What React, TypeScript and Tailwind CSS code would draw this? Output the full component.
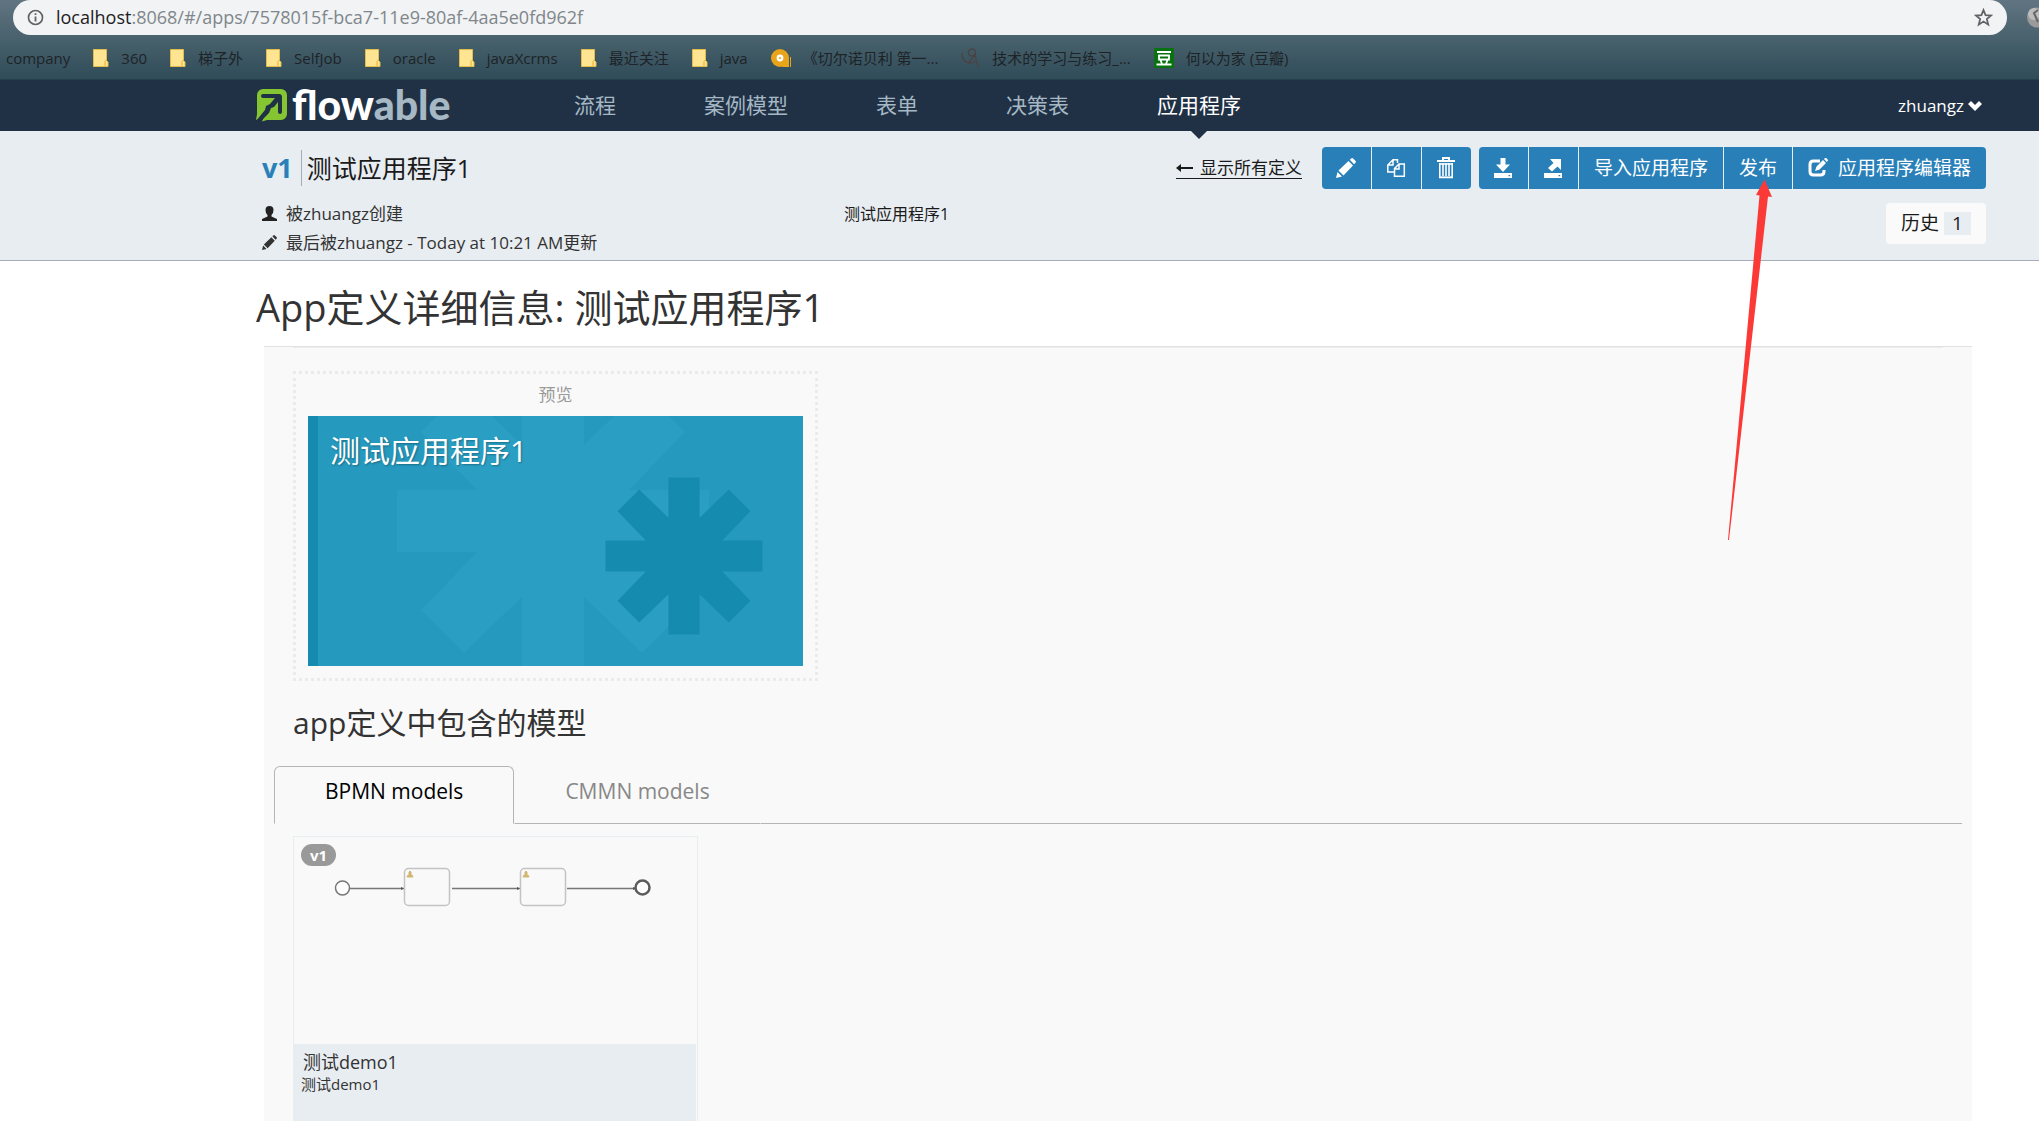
import { useState, type ReactNode } from "react"

type Bookmark = {
	title: string
	icon: "none" | "folder" | "disc" | "figure" | "douban"
}

const bookmarks: Bookmark[] = [
	{ title: "company", icon: "none" },
	{ title: "360", icon: "folder" },
	{ title: "梯子外", icon: "folder" },
	{ title: "SelfJob", icon: "folder" },
	{ title: "oracle", icon: "folder" },
	{ title: "javaXcrms", icon: "folder" },
	{ title: "最近关注", icon: "folder" },
	{ title: "java", icon: "folder" },
	{ title: "《切尔诺贝利 第一...", icon: "disc" },
	{ title: "技术的学习与练习_...", icon: "figure" },
	{ title: "何以为家 (豆瓣)", icon: "douban" }
]

const navItems = ["流程", "案例模型", "表单", "决策表", "应用程序"]

const tabs = ["BPMN models", "CMMN models"]

function BookmarkIcon({ icon }: { icon: Bookmark["icon"] }) {
	if (icon === "folder") {
		return (
			<svg width="16" height="18" viewBox="0 0 16 18">
				<path d="M.5.5h13v11l1.500 1.500v4.500H.5z" fill="#ffe591" stroke="#e3bd4c" />
				<path d="M12 17v-4.500l1.500-1.500" fill="none" stroke="#e3b02c" />
			</svg>
		)
	}
	if (icon === "disc") {
		return (
			<svg width="20" height="18" viewBox="0 0 20 18">
				<circle cx="9" cy="9" r="9" fill="#e8a51c" />
				<path d="M11 18l7-9v9z" fill="#e8a51c" />
				<circle cx="9" cy="9" r="3.400" fill="#fff" />
				<circle cx="9" cy="9" r="1.200" fill="#e8b95a" />
				<path d="M19.500 8v10" stroke="#e8a51c" />
			</svg>
		)
	}
	if (icon === "figure") {
		return (
			<svg width="19" height="20" viewBox="0 0 19 20" fill="none" stroke="#4a4444">
				<circle cx="11" cy="4.500" r="3.500" strokeWidth="1.600" />
				<path d="M1 5q0 6 4 9 3 1 5-2l4-5q1 6 3.500 12M7 15q4 1 8-2" strokeWidth="1.400" />
			</svg>
		)
	}
	if (icon === "douban") {
		return (
			<svg width="20" height="20" viewBox="0 0 20 20" fill="none" stroke="#fff" strokeWidth="1.800">
				<path d="M0 0h20v20H0z" fill="#07720f" stroke="none" />
				<path d="M3 4h14M5 7.500h10v4H5zM6.500 12l1.500 4M13.500 12L12 16M2.500 16.500h15" />
			</svg>
		)
	}
	return null
}

function BrowserBar() {
	return (
		<div className="h-20 bg-linear-to-b from-[#607581] via-[#48616c] to-[#2f4c58] border-b border-[#26404a]">
			<div className="flex items-start">
				<div className="flex flex-1 items-center h-[35px] ml-[13px] px-[14px] rounded-[18px] bg-[#f1f3f4] text-[18px]">
					<svg width="17" height="17" viewBox="0 0 17 17" fill="none" stroke="#5f6368">
						<circle cx="8.500" cy="8.500" r="7" strokeWidth="1.700" />
						<path d="M8.500 7.500v5M8.500 4.300v1.700" strokeWidth="1.800" />
					</svg>
					<label htmlFor="address" className="ml-3 text-[#202124]">
						localhost
					</label>
					<input
						id="address"
						type="text"
						defaultValue=":8068/#/apps/7578015f-bca7-11e9-80af-4aa5e0fd962f"
						className="flex-1 text-[#80868b] outline-none"
					/>
					<button aria-label="收藏">
						<svg width="19" height="19" viewBox="0 0 24 24" fill="none" stroke="#5f6368" strokeWidth="2.200">
							<path d="M12 2.500l2.600 6.500 7 .5-5.400 4.500 1.800 7-6-3.900-6 3.900 1.800-7L2.400 9.500l7-.5z" />
						</svg>
					</button>
				</div>
				<svg width="32" height="35" viewBox="0 0 32 35">
					<circle cx="30" cy="17.500" r="10" fill="#9a9a9a" />
					<circle cx="27" cy="14" r="6" fill="#bcbcbc" />
					<path d="M31 10l-4 3 4 9" fill="none" stroke="#666" strokeWidth="2" />
				</svg>
			</div>
			<ul className="flex items-center h-[46px] gap-[23px] pl-[6px] text-[15px] text-[#1d2327] whitespace-nowrap">
				{bookmarks.map((item) => (
					<li key={item.title} className="flex items-center gap-3">
						<BookmarkIcon icon={item.icon} />
						<a href="#">{item.title}</a>
					</li>
				))}
			</ul>
		</div>
	)
}

function Logo() {
	return (
		<a href="#" aria-label="flowable" className="flex items-center gap-1 w-[200px]">
			<svg width="32" height="33" viewBox="0 0 32 33">
				<path
					d="M7 0h18a6 6 0 0 1 6 6v19a6 6 0 0 1-6 6H11l-5 1.500 2-5L0 31l1-6V6a6 6 0 0 1 6-6z"
					fill="#84c531"
				/>
				<path
					d="M7 5h16a3 3 0 0 1 3 3v15a2 2 0 0 1-4 0V13l-4 5-3 1-2 5-7 7-6 1 9-11 1-4 4-2 5-6H7a2 2 0 0 1 0-4z"
					fill="#203146"
				/>
			</svg>
			<span className="pb-[2px] font-['Lato',sans-serif] font-black text-[41px] leading-[40px] text-white">
				flow<span className="text-[#a5b8c3]">able</span>
			</span>
		</a>
	)
}

function NavBar() {
	return (
		<nav className="flex items-center h-[51px] pl-64 pr-[57px] bg-[#203146]">
			<Logo />
			<ul className="flex flex-1 gap-[88px] pl-[118px] text-[21px] leading-[51px] text-[#a5b8c3]">
				{navItems.map((item) => (
					<li key={item} className="relative">
						<a href="#" className={item === "应用程序" ? "text-white" : ""}>
							{item}
						</a>
						{item === "应用程序" && (
							<span className="absolute top-full left-1/2 -translate-x-1/2 border-x-8 border-x-transparent border-t-8 border-t-[#203146]" />
						)}
					</li>
				))}
			</ul>
			<button className="flex items-center gap-1 text-[17px] text-white">
				zhuangz
				<svg width="14" height="10" viewBox="0 0 14 10">
					<path d="M0 3l3-3 4 4 4-4 3 3-7 7z" fill="#fff" />
				</svg>
			</button>
		</nav>
	)
}

function PencilIcon({ size }: { size: number }) {
	return (
		<svg width={size} height={size} viewBox="0 0 20 20" fill="currentColor">
			<path d="M0 20l1.500-6 4.500 4.500zM2.500 12.500L12.500 3 17 7.500 7.500 17.500zM13.800 1.800L15.500.3q.8-.6 1.600.2l2.500 2.500q.7.8 0 1.600l-1.500 1.600z" />
		</svg>
	)
}

function CopyIcon() {
	return (
		<svg width="20" height="20" viewBox="0 0 20 20" fill="none" stroke="currentColor" strokeWidth="1.500">
			<path d="M8 14H1.800V7L7 1.800h4.500V5M7 2v5H2" />
			<path d="M8.500 10.500L13 6h5.300v12.300H8.500zM13 6v5H8.500" />
		</svg>
	)
}

function TrashIcon() {
	return (
		<svg width="18" height="22" viewBox="0 0 18 22" fill="none" stroke="currentColor">
			<path d="M0 4h18M6 3V1h6v2" strokeWidth="2" />
			<path d="M2.800 6v14.200h12.400V6M6 6v13M9 6v13M12 6v13" strokeWidth="1.600" />
			<path d="M2 7h14M2 20.500h14" strokeWidth="1.600" />
		</svg>
	)
}

function DownloadIcon() {
	return (
		<svg width="18" height="20" viewBox="0 0 18 20" fill="currentColor">
			<path d="M6.500 0h5v6.500H16l-7 7.500-7-7.500h4.500z" />
			<path fillRule="evenodd" d="M0 15h18v5H0zM14.500 17v1.200h1.700V17z" />
		</svg>
	)
}

function ExportIcon() {
	return (
		<svg width="18" height="20" viewBox="0 0 18 20" fill="currentColor">
			<path d="M6 1h11v11l-3.500-3.500L8 13.500 4 10l5.500-5z" />
			<path fillRule="evenodd" d="M0 15h18v5H0zM14.500 17v1.200h1.700V17z" />
		</svg>
	)
}

function EditIcon() {
	return (
		<svg width="20" height="20" viewBox="0 0 20 20">
			<path
				d="M12 3H5.500Q2 3 2 6.500v7Q2 17 5.500 17h7q3.500 0 3.500-3.500V12"
				fill="none"
				stroke="currentColor"
				strokeWidth="3"
			/>
			<path d="M7 13l1.500-4.500L15 2l3 3-6.500 6.500zM16 1l1-1q1-.5 1.500.2l1.200 1.200q.6.8 0 1.600l-.9.900z" fill="currentColor" />
		</svg>
	)
}

function ActionButton({ label, children }: { label?: string; children: ReactNode }) {
	return (
		<button
			aria-label={label}
			className={`flex items-center justify-center gap-[10px] h-[42px] bg-[#2980b9] hover:bg-[#2472a4] text-[19px] text-white whitespace-nowrap ${
				label ? "w-[49px]" : "px-[15px]"
			}`}
		>
			{children}
		</button>
	)
}

function DefinitionHeader() {
	return (
		<header className="h-[130px] pl-[262px] pr-[53px] pt-4 bg-[#e8edf1] border-b border-[#a4acb9]">
			<div className="flex items-center justify-between h-[42px]">
				<h2 className="flex items-center text-[25px] leading-[36px] text-[#1a1a1a]">
					<span className="pr-2 mr-[5px] border-r border-[#a4acb9] text-[27px] font-bold text-[#2980b9]">
						v1
					</span>
					测试应用程序1
				</h2>
				<div className="flex items-center gap-2">
					<a href="#" className="flex items-center gap-[7px] h-[22px] mr-3 border-b border-[#1a1a1a] text-[17px] text-[#1a1a1a]">
						<svg width="17" height="8" viewBox="0 0 17 8">
							<path d="M0 4l5-4v3h12v2H5v3z" fill="#1a1a1a" />
						</svg>
						显示所有定义
					</a>
					<div className="flex gap-px rounded overflow-hidden">
						<ActionButton label="编辑"><PencilIcon size={20} /></ActionButton>
						<ActionButton label="复制"><CopyIcon /></ActionButton>
						<ActionButton label="删除"><TrashIcon /></ActionButton>
					</div>
					<div className="flex gap-px rounded overflow-hidden">
						<ActionButton label="下载"><DownloadIcon /></ActionButton>
						<ActionButton label="导出"><ExportIcon /></ActionButton>
						<ActionButton>导入应用程序</ActionButton>
						<ActionButton>发布</ActionButton>
						<ActionButton>
							<EditIcon />
							应用程序编辑器
						</ActionButton>
					</div>
				</div>
			</div>
			<div className="flex items-start pt-[10px] text-[17px] leading-[29px] text-[#333]">
				<div className="w-[582px]">
					<p className="flex items-center gap-[9px]">
						<svg width="15" height="15" viewBox="0 0 15 15" fill="#222">
							<path d="M7.500 0q4 0 4 4 0 3.500-2 5v1.500l5.500 2.500V15H0v-2l5.500-2.500V9q-2-1.500-2-5 0-4 4-4z" />
						</svg>
						被zhuangz创建
					</p>
					<p className="flex items-center gap-[9px]">
						<PencilIcon size={15} />
						最后被zhuangz - Today at 10:21 AM更新
					</p>
				</div>
				<p className="flex-1 text-base leading-[30px] text-[#1a1a1a]">测试应用程序1</p>
				<button className="flex items-center gap-[5px] h-[41px] mt-1 px-[15px] rounded bg-[#fafafa] text-[19px] text-[#1a1a1a]">
					历史
					<span className="w-[27px] bg-[#e8edf1] leading-[23px]">1</span>
				</button>
			</div>
		</header>
	)
}

const asterisk =
	"M-31-156H31V-76L89-132 132-89 76-31H156V31H76L132 89 89 132 31 76V156H-31V76L-89 132-132 89-76 31H-156V-31H-76L-132-89-89-132-31-76z"

function AppTile() {
	return (
		<div className="relative h-[250px] overflow-hidden bg-[#2599be] border-l-[10px] border-[#168bb0]">
			<svg className="absolute inset-0" width="485" height="250" viewBox="10 0 485 250">
				<path d={asterisk} transform="translate(245 105)" fill="#2a9fc3" />
				<path d={asterisk} transform="translate(376 140) scale(.503)" fill="#168bb0" />
			</svg>
			<h3 className="relative pt-[15px] pl-3 text-[30px] leading-[40px] text-white text-shadow-[1px_1px_2px_rgb(0_0_0/0.3)]">
				测试应用程序1
			</h3>
		</div>
	)
}

function ProcessDiagram() {
	return (
		<svg width="403" height="207" viewBox="294 837 403 207" fill="none">
			<g stroke="#777" strokeWidth="1.500">
				<path d="M350 888.500h54M452 888.500h68M567 888.500h68" />
				<path d="M401 887l3 1.500-3 1.500zM517 887l3 1.500-3 1.500zM633 887l3 1.500-3 1.500z" fill="#555" stroke="none" />
				<circle cx="342.500" cy="888" r="7" fill="#fff" />
				<circle cx="642.500" cy="887.500" r="7" fill="#fff" stroke="#5c5c5c" strokeWidth="2.500" />
			</g>
			<g stroke="#c4c4c4" strokeWidth="1.500">
				<rect x="404.500" y="868.500" width="45" height="37" rx="4" />
				<rect x="520.500" y="868.500" width="45" height="37" rx="4" />
			</g>
			<path
				d="M407 877q0-2 2-2v-3q1-2 2 0v3q2 0 2 2zM523 877q0-2 2-2v-3q1-2 2 0v3q2 0 2 2z"
				fill="#d2b773"
				stroke="#d2b773"
			/>
		</svg>
	)
}

function ModelCard() {
	return (
		<div className="relative w-[405px] border border-[#e8edf1]">
			<span className="absolute top-[7px] left-[7px] w-[35px] rounded-full bg-[#999] text-center text-[15px] leading-[22px] font-bold text-white">
				v1
			</span>
			<ProcessDiagram />
			<div className="h-[140px] mr-px bg-[#e8edf1] text-[#333]">
				<h4 className="pt-[5px] pl-[9px] text-[18px] leading-[26px]">测试demo1</h4>
				<p className="pl-[7px] text-[15px] leading-[18px]">测试demo1</p>
			</div>
		</div>
	)
}

export default function App() {
	const [activeTab, setActiveTab] = useState("BPMN models")

	return (
		<div className="relative flex flex-col h-screen overflow-hidden bg-white font-['Open_Sans','Noto_Sans_CJK_SC',sans-serif]">
			<BrowserBar />
			<NavBar />
			<DefinitionHeader />
			<main className="flex flex-col flex-1 min-h-0 pl-64 pr-[67px]">
				<h1 className="pt-[21px] pb-[14px] text-[38px] leading-[50px] text-[#333]">
					App定义详细信息: 测试应用程序1
				</h1>
				<div className="flex-1 min-h-0 ml-2 border-t border-[#e2e2e2] bg-[#f9f9f9]">
					<div className="h-px mx-[29px] mb-[23px] bg-[#ebebeb]" />
					<section className="w-[525px] ml-[29px] px-3 pb-3 border-3 border-dotted border-[#ebebeb]">
						<p className="text-center text-[17px] leading-[42px] text-[#999]">预览</p>
						<AppTile />
					</section>
					<h2 className="mt-[22px] mb-[23px] ml-[29px] text-[30px] leading-[40px] text-[#333]">
						app定义中包含的模型
					</h2>
					<div role="tablist" className="flex mx-[10px]">
						{tabs.map((tab) => (
							<button
								key={tab}
								role="tab"
								aria-selected={tab === activeTab}
								onClick={() => setActiveTab(tab)}
								className={`h-[58px] px-[50px] pb-[6px] border text-[21px] ${
									tab === activeTab
										? "rounded-t-md border-[#b5b5b5] border-b-[#f9f9f9] text-black"
										: "border-transparent border-b-[#b5b5b5] text-[#888]"
								}`}
							>
								{tab}
							</button>
						))}
						<div className="flex-1 border-b border-[#b5b5b5]" />
					</div>
					<div className="mt-3 ml-[29px]">
						<ModelCard />
					</div>
				</div>
			</main>
			{/* callout pointing at the publish button */}
			<svg
				className="absolute top-[179px] right-[266px] pointer-events-none"
				width="46"
				height="362"
				viewBox="1727 179 46 362"
			>
				<path d="M1764.500 179.500L1772 197l-4-.5L1729 540h-1l31.500-344.500-3.500-.5z" fill="#fb3a38" />
			</svg>
		</div>
	)
}
